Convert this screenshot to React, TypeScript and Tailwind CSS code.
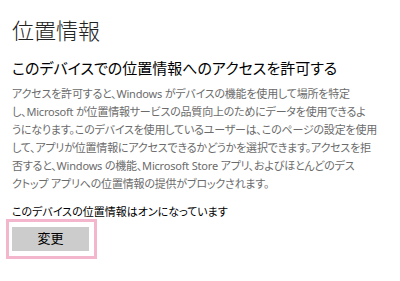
import React from "react";

const jp = { fontFamily: '"Noto Sans", "Noto Sans CJK JP", sans-serif' };

export default function App() {
  const lines = [
    "アクセスを許可すると、Windows がデバイスの機能を使用して場所を特定",
    "し、Microsoft が位置情報サービスの品質向上のためにデータを使用できるよ",
    "うになります。このデバイスを使用しているユーザーは、このページの設定を使用",
    "して、アプリが位置情報にアクセスできるかどうかを選択できます。アクセスを拒",
    "否すると、Windows の機能、Microsoft Store アプリ、およびほとんどのデス",
    "クトップ アプリへの位置情報の提供がブロックされます。",
  ];
  return (
    <div
      className="w-[400px] h-[281px] bg-white overflow-hidden pl-[12px] flex flex-col [font-feature-settings:'palt']"
      style={jp}
    >
      <div className="mt-[15px] text-[22px] leading-[30px] font-light text-[#222] whitespace-nowrap">
        位置情報
      </div>
      <div className="mt-[11px] text-[15px] leading-[24px] text-black whitespace-nowrap">
        このデバイスでの位置情報へのアクセスを許可する
      </div>
      <div className="mt-[5px] text-[11px] leading-[18px] tracking-[-0.2px] text-[#6b6b6b]">
        {lines.map((l, i) => (
          <div key={i} className="whitespace-nowrap">
            {l}
          </div>
        ))}
      </div>
      <div className="mt-[11px] text-[11px] leading-[16px] text-black whitespace-nowrap">
        このデバイスの位置情報はオンになっています
      </div>
      <div className="mt-[-1px] -ml-[6px] w-[91px] h-[40px] border-[3px] border-[#f4b6cc] pl-[3px] pt-[5px]">
        <div className="w-[77px] h-[24px] bg-[#cccccc] flex items-center justify-center text-[13px] text-black">
          変更
        </div>
      </div>
    </div>
  );
}
